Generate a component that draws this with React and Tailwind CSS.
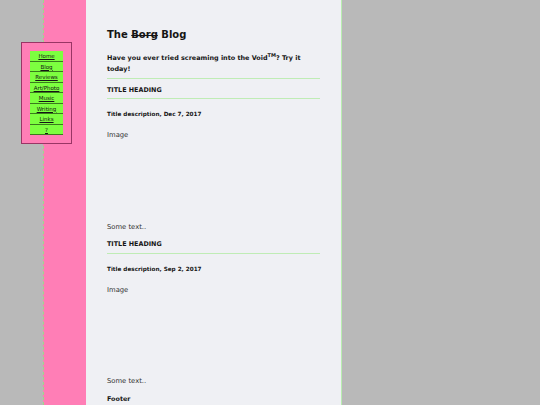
import React from "react";

const navItems = ["Home", "Blog", "Reviews", "Art/Photo", "Music", "Writing", "Links", "?"];

function Post({ date, gap, second }) {
  return (
    <div>
      <div
        className={
          second
            ? "text-[6.4px] font-bold leading-[10px] pt-[6px] pb-[4px] border-b border-[#bfecb5]"
            : "text-[6.4px] font-bold leading-[10px] pt-[6px] pb-[3px] border-b border-[#bfecb5]"
        }
      >
        TITLE HEADING
      </div>
      <div className="text-[5.7px] font-bold leading-[10px] mt-[10px]">Title description, {date}</div>
      <div className="text-[6.8px] leading-[10px] mt-[11px] text-[#333]">Image</div>
      <div style={{ height: gap }}></div>
      <div className="text-[6.8px] leading-[10px] text-[#333]">Some text..</div>
    </div>
  );
}

export default function App() {
  return (
    <div
      className="relative flex w-[540px] h-[405px] overflow-hidden bg-[#b9b9b9] text-[#151515]"
      style={{ fontFamily: '"DejaVu Sans", sans-serif' }}
    >
      <div className="w-[43px] shrink-0"></div>
      <div className="w-[43px] shrink-0 bg-[#ff7eb6] border-l border-dashed border-[#9fd88a]"></div>
      <div className="w-[256px] shrink-0 bg-[#eff0f4] border-r border-[#b8eeb0] px-[21px] pt-[28px]">
        <h1 className="text-[10px] font-bold leading-[14px]">
          The <span className="line-through">Borg</span> Blog
        </h1>
        <div className="text-[6.45px] font-bold leading-[11px] mt-[11px] pb-[3px] border-b border-[#bfecb5]">
          Have you ever tried screaming into the Void
          <span className="relative -top-[3px] text-[5px] leading-none">TM</span>? Try it today!
        </div>
        <Post date="Dec 7, 2017" gap={82} />
        <div className="mt-[1px]">
          <Post date="Sep 2, 2017" gap={81} second />
        </div>
        <div className="text-[6.4px] font-bold leading-[10px] mt-[8px]">Footer</div>
      </div>
      <div className="flex-1"></div>

      <nav className="absolute left-[21px] top-[42px] w-[51px] h-[102px] bg-[#ff7eb6] border border-[#9a3565] pt-[8px] flex flex-col items-center">
        <div className="w-[33px] flex flex-col">
          {navItems.map((n) => (
            <a
              key={n}
              href="#"
              className="block h-[10.5px] bg-[#7dff40] border-b border-[#3b7a1e] text-center text-[5.5px] leading-[10px] underline text-[#151515]"
            >
              {n}
            </a>
          ))}
        </div>
      </nav>
    </div>
  );
}
